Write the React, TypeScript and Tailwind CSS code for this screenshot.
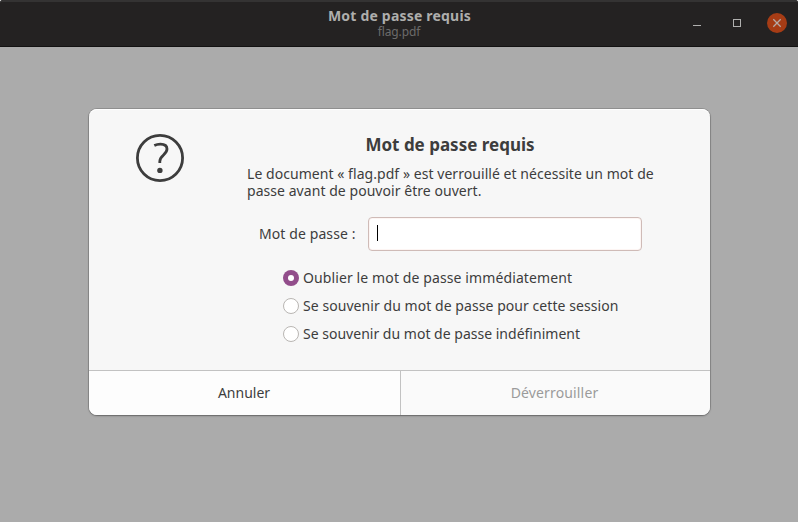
import type { ReactNode } from "react";

function WindowControls() {
  return (
    <svg className="h-[46px] w-[128px]" viewBox="0 0 128 46" fill="none">
      <rect x="23" y="25" width="8" height="1" fill="#b0b0af" />
      <rect x="63.5" y="19.5" width="7" height="7" stroke="#b0b0af" />
      <circle cx="107" cy="23" r="10" fill="#a63c15" />
      <path d="M103.3 19.3l7.4 7.4M110.7 19.3l-7.4 7.4" stroke="#b5aaa6" strokeWidth="1.3" />
    </svg>
  );
}

function Header() {
  return (
    <header className="grid h-[47px] grid-cols-[128px_1fr_128px] border-t-2 border-b border-t-[#343333] border-b-[#131212] bg-[#242222]">
      <span />
      <div className="flex flex-col items-center whitespace-nowrap pt-[5px]">
        <h1 className="ml-px text-[14px] leading-[18px] font-bold tracking-[0.2px] text-[#aeaeac]">Mot de passe requis</h1>
        <p className="text-[12px] leading-[14px] tracking-[-0.1px] text-[#6c6b6a]">flag.pdf</p>
      </div>
      <div className="-mt-0.5">
        <WindowControls />
      </div>
    </header>
  );
}

function Radio({ checked = false, tracking, children }: { checked?: boolean; tracking: string; children: ReactNode }) {
  return (
    <label className="flex h-7 items-center gap-1">
      {checked ? (
        <span className="flex size-4 shrink-0 items-center justify-center rounded-full bg-[#924d8b]">
          <span className="size-1.5 rounded-full bg-white" />
        </span>
      ) : (
        <span className="size-4 shrink-0 rounded-full border border-[#b9b6b3] bg-white" />
      )}
      <span className={`pb-0.5 whitespace-nowrap ${tracking}`}>{children}</span>
    </label>
  );
}

export default function App() {
  return (
    <div className="flex h-[522px] w-[798px] flex-col overflow-hidden rounded-t-[3px] bg-[#ababab] font-['Noto_Sans','Open_Sans',sans-serif] text-[14px] leading-[17px] text-[#3d3d3d]">
      <Header />
      <main className="pt-[62px] pl-[89px]">
        <section className="flex h-[306px] w-[621px] flex-col overflow-hidden rounded-lg bg-[#f7f7f7] shadow-[0_0_0_1px_rgba(0,0,0,0.15),0_1px_2px_rgba(0,0,0,0.3),inset_0_1px_white]">
          <div className="flex h-[261px]">
            <div className="w-[158px] shrink-0 pt-[25px] pl-[47px]">
              <svg className="size-12" viewBox="0 0 48 48" fill="none" stroke="#3d3d3d">
                <circle cx="24" cy="24" r="22.6" strokeWidth="2.8" />
                <path d="M18.3 11.5C20.3 10.5 22.3 10.1 24.4 10.1c4.200 0 6.600 1.800 6.600 4.900 0 2.500-1.500 4.200-3.700 6.200-2.400 2.200-3.500 3.800-3.500 6.200v1.700" strokeWidth="2.8" />
                <circle cx="23.900" cy="36.400" r="2.700" fill="#3d3d3d" stroke="none" />
              </svg>
            </div>
            <div className="w-[410px] pt-[26px]">
              <h2 className="-ml-1 h-5 text-center text-[17px] leading-5 font-bold whitespace-nowrap tracking-[0px]">Mot de passe requis</h2>
              <p className="mt-[10px] whitespace-nowrap">
                <span className="block tracking-[0.05px]">Le document « flag.pdf » est verrouillé et nécessite un mot de</span>
                <span className="block tracking-[0.05px]">passe avant de pouvoir être ouvert.</span>
              </p>
              <div className="mt-[18px] flex items-center pl-3">
                <label className="w-[109px] pb-0.5 whitespace-nowrap tracking-[0.1px]">Mot de passe :</label>
                <div className="flex h-[34px] w-[274px] items-center rounded-[4px] border border-[#cfbbb7] bg-white pl-2 shadow-[inset_0_0_0_1px_#fdf5f3]">
                  <span className="mb-0.5 h-4 w-px bg-black" />
                </div>
              </div>
              <div className="mt-[13px] pl-9">
                <Radio checked tracking="tracking-[0.11px]">Oublier le mot de passe immédiatement</Radio>
                <Radio tracking="tracking-[0.06px]">Se souvenir du mot de passe pour cette session</Radio>
                <Radio tracking="tracking-[0.01px]">Se souvenir du mot de passe indéfiniment</Radio>
              </div>
            </div>
          </div>
          <div className="grid h-[45px] grid-cols-[311px_310px] border-t border-[#c2c2c2]">
            <button className="bg-[#fdfdfd] pr-px pb-0.5">Annuler</button>
            <button className="border-l border-[#c2c2c2] bg-[#fafafa] pr-0.5 pb-0.5 tracking-[0.15px] text-[#9b9b9b]" disabled>Déverrouiller</button>
          </div>
        </section>
      </main>
    </div>
  );
}
